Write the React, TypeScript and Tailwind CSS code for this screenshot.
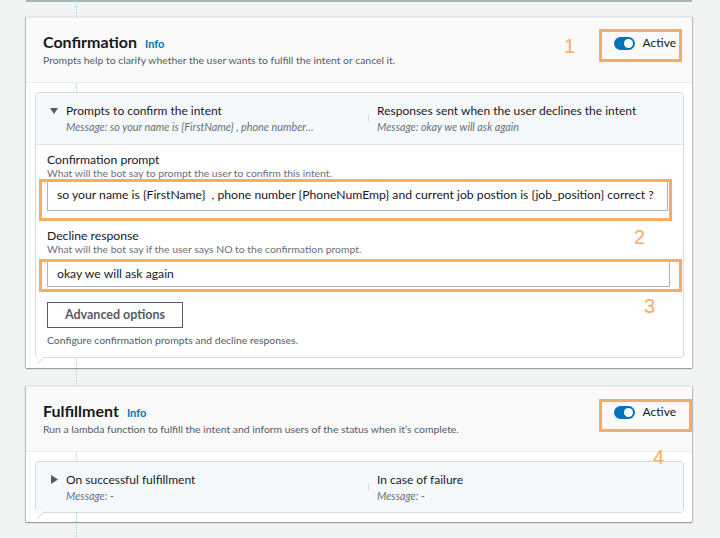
import React from 'react';

const font = { fontFamily: 'Lato, "Open Sans", Arial, sans-serif' };
const digit = { fontFamily: '"Liberation Sans", Arial, sans-serif' };

function Toggle() {
  return (
    <div className="flex items-center gap-[8px] self-start pt-[5px]">
      <span className="flex h-[13px] w-[21px] items-center justify-end rounded-full bg-[#0073bb] pr-[2px]">
        <span className="h-[9px] w-[9px] rounded-full bg-white" />
      </span>
      <span className="text-[12px] leading-[14px] text-[#16191f]">Active</span>
    </div>
  );
}

function Caret({ open }: { open: boolean }) {
  return open ? (
    <svg className="mt-[6px]" width="8" height="6" viewBox="0 0 8 6">
      <path d="M0 0 H8 L4 6 Z" fill="#545b64" />
    </svg>
  ) : (
    <svg className="ml-[1px] mt-[4px]" width="7" height="9" viewBox="0 0 7 9">
      <path d="M0 0 V9 L7 4.5 Z" fill="#545b64" />
    </svg>
  );
}

function Tail() {
  return (
    <svg className="absolute -bottom-[7px] left-[1px]" width="9" height="8" viewBox="0 0 9 8">
      <path d="M0 0 L0 7 L7 0" fill="#ffffff" />
      <path d="M0.5 7.5 L7 1" stroke="#d5dbdb" strokeWidth="1" />
    </svg>
  );
}

function SectionHeader({ title, desc }: { title: string; desc: string }) {
  return (
    <div className="relative z-10 flex justify-between border-b border-[#eaeded] bg-[#fafafa] pl-[17px] pr-[16px] pt-[13px] pb-[15px]">
      <div>
        <div className="flex items-baseline gap-[8px]">
          <h2 className="text-[16px] font-bold leading-[22px] text-[#16191f]">{title}</h2>
          <a className="text-[11px] font-bold text-[#0073bb]">Info</a>
        </div>
        <p className="text-[10.4px] leading-[14px] text-[#545b64]">{desc}</p>
      </div>
      <Toggle />
    </div>
  );
}

function Summary({
  open,
  left,
  leftMsg,
  right,
  rightMsg,
}: {
  open: boolean;
  left: string;
  leftMsg: string;
  right: string;
  rightMsg: string;
}) {
  return (
    <div className={`flex items-start rounded-t-[4px] bg-[#f6f9fb] pt-[9px] ${open ? 'pb-[10px]' : 'pb-[9px]'}`}>
      <div className="flex w-[332px] shrink-0 pl-[14px]">
        <div className="w-[16px]">
          <Caret open={open} />
        </div>
        <div>
          <div className="text-[12px] leading-[18px] text-[#16191f]">{left}</div>
          <div className="text-[10.8px] italic leading-[14px] text-[#687078]">{leftMsg}</div>
        </div>
      </div>
      <div className="mt-[12px] h-[8px] w-px bg-[#d5dbdb]" />
      <div className="pl-[8px]">
        <div className="text-[12px] leading-[18px] text-[#16191f]">{right}</div>
        <div className="text-[10.8px] italic leading-[14px] text-[#687078]">{rightMsg}</div>
      </div>
    </div>
  );
}

const cardShadow =
  'shadow-[0_1px_1px_0_rgba(0,28,36,0.35),1px_0_1px_0_rgba(0,28,36,0.2),-1px_0_1px_0_rgba(0,28,36,0.2)]';

export default function App() {
  return (
    <div className="relative h-[538px] w-[720px] overflow-hidden bg-[#f2f3f3]" style={font}>
      {/* connector line */}
      <div className="absolute left-[76px] top-0 z-[5] h-full border-l border-dotted border-[#9ed3e2]" />

      {/* bottom of previous card */}
      <div className="ml-[26px] h-[2px] w-[666px] bg-[#aab7b8]" />

      {/* Confirmation card */}
      <div className={`ml-[26px] mt-[15px] w-[666px] border-t border-[#eaeded] bg-white ${cardShadow}`}>
        <SectionHeader
          title="Confirmation"
          desc="Prompts help to clarify whether the user wants to fulfill the intent or cancel it."
        />
        <div className="px-[9px] pt-[9px] pb-[10px]">
          <div className="relative z-10 w-[649px] rounded-[4px] border border-[#d5dbdb] bg-white">
            <Summary
              open
              left="Prompts to confirm the intent"
              leftMsg="Message: so your name is {FirstName} , phone number…"
              right="Responses sent when the user declines the intent"
              rightMsg="Message: okay we will ask again"
            />
            <div className="border-t border-[#e1e4e6] pl-[11px] pr-[14px] pt-[7px] pb-[10px]">
              <div className="text-[12.2px] leading-[15px] text-[#16191f]">Confirmation prompt</div>
              <div className="text-[10.4px] leading-[13px] text-[#687078]">
                What will the bot say to prompt the user to confirm this intent.
              </div>
              <div className="flex h-[31px] w-[621px] items-center whitespace-nowrap border border-[#aab7b8] bg-white pl-[9px] text-[12.2px] text-[#16191f]">
                so your name is {'{FirstName}'}&nbsp; , phone number {'{PhoneNumEmp}'} and current job postion is {'{job_position}'} correct ?
              </div>
              <div className="mt-[17px] text-[12.2px] leading-[15px] text-[#16191f]">Decline response</div>
              <div className="text-[10.4px] leading-[13px] text-[#687078]">
                What will the bot say if the user says NO to the confirmation prompt.
              </div>
              <div className="mt-[5px] flex h-[26px] w-[623px] items-center border border-[#aab7b8] bg-white pl-[9px] text-[12.2px] text-[#16191f]">
                okay we will ask again
              </div>
              <button className="mt-[15px] h-[26px] w-[136px] border border-[#545b64] bg-white text-[12.5px] font-bold text-[#545b64]">
                Advanced options
              </button>
              <div className="mt-[5px] text-[10.4px] leading-[14px] text-[#545b64]">
                Configure confirmation prompts and decline responses.
              </div>
            </div>
            <Tail />
          </div>
        </div>
      </div>

      {/* Fulfillment card */}
      <div className={`ml-[26px] mt-[18px] w-[666px] border-t border-[#eaeded] bg-white ${cardShadow}`}>
        <SectionHeader
          title="Fulfillment"
          desc="Run a lambda function to fulfill the intent and inform users of the status when it's complete."
        />
        <div className="px-[9px] pt-[9px] pb-[9px]">
          <div className="relative z-10 w-[649px] rounded-[4px] border border-[#d5dbdb]">
            <Summary
              open={false}
              left="On successful fulfillment"
              leftMsg="Message: -"
              right="In case of failure"
              rightMsg="Message: -"
            />
            <Tail />
          </div>
        </div>
      </div>

      {/* annotations */}
      <div className="absolute left-[599px] top-[29px] z-20 h-[33px] w-[83px] border-[3px] border-[#f7ac61]" />
      <div className="absolute left-[564px] top-[35px] z-20 text-[20px] leading-[22px] text-[#f7ac61]" style={digit}>1</div>
      <div className="absolute left-[39px] top-[179px] z-20 h-[42px] w-[633px] border-[3px] border-[#f7ac61]" />
      <div className="absolute left-[634px] top-[226px] z-20 text-[20px] leading-[22px] text-[#f7ac61]" style={digit}>2</div>
      <div className="absolute left-[39px] top-[259px] z-20 h-[33px] w-[643px] border-[3px] border-[#f7ac61]" />
      <div className="absolute left-[644px] top-[295px] z-20 text-[20px] leading-[22px] text-[#f7ac61]" style={digit}>3</div>
      <div className="absolute left-[599px] top-[399px] z-20 h-[33px] w-[93px] border-[3px] border-[#f7ac61]" />
      <div className="absolute left-[653px] top-[446px] z-20 text-[20px] leading-[22px] text-[#f7ac61]" style={digit}>4</div>
    </div>
  );
}
